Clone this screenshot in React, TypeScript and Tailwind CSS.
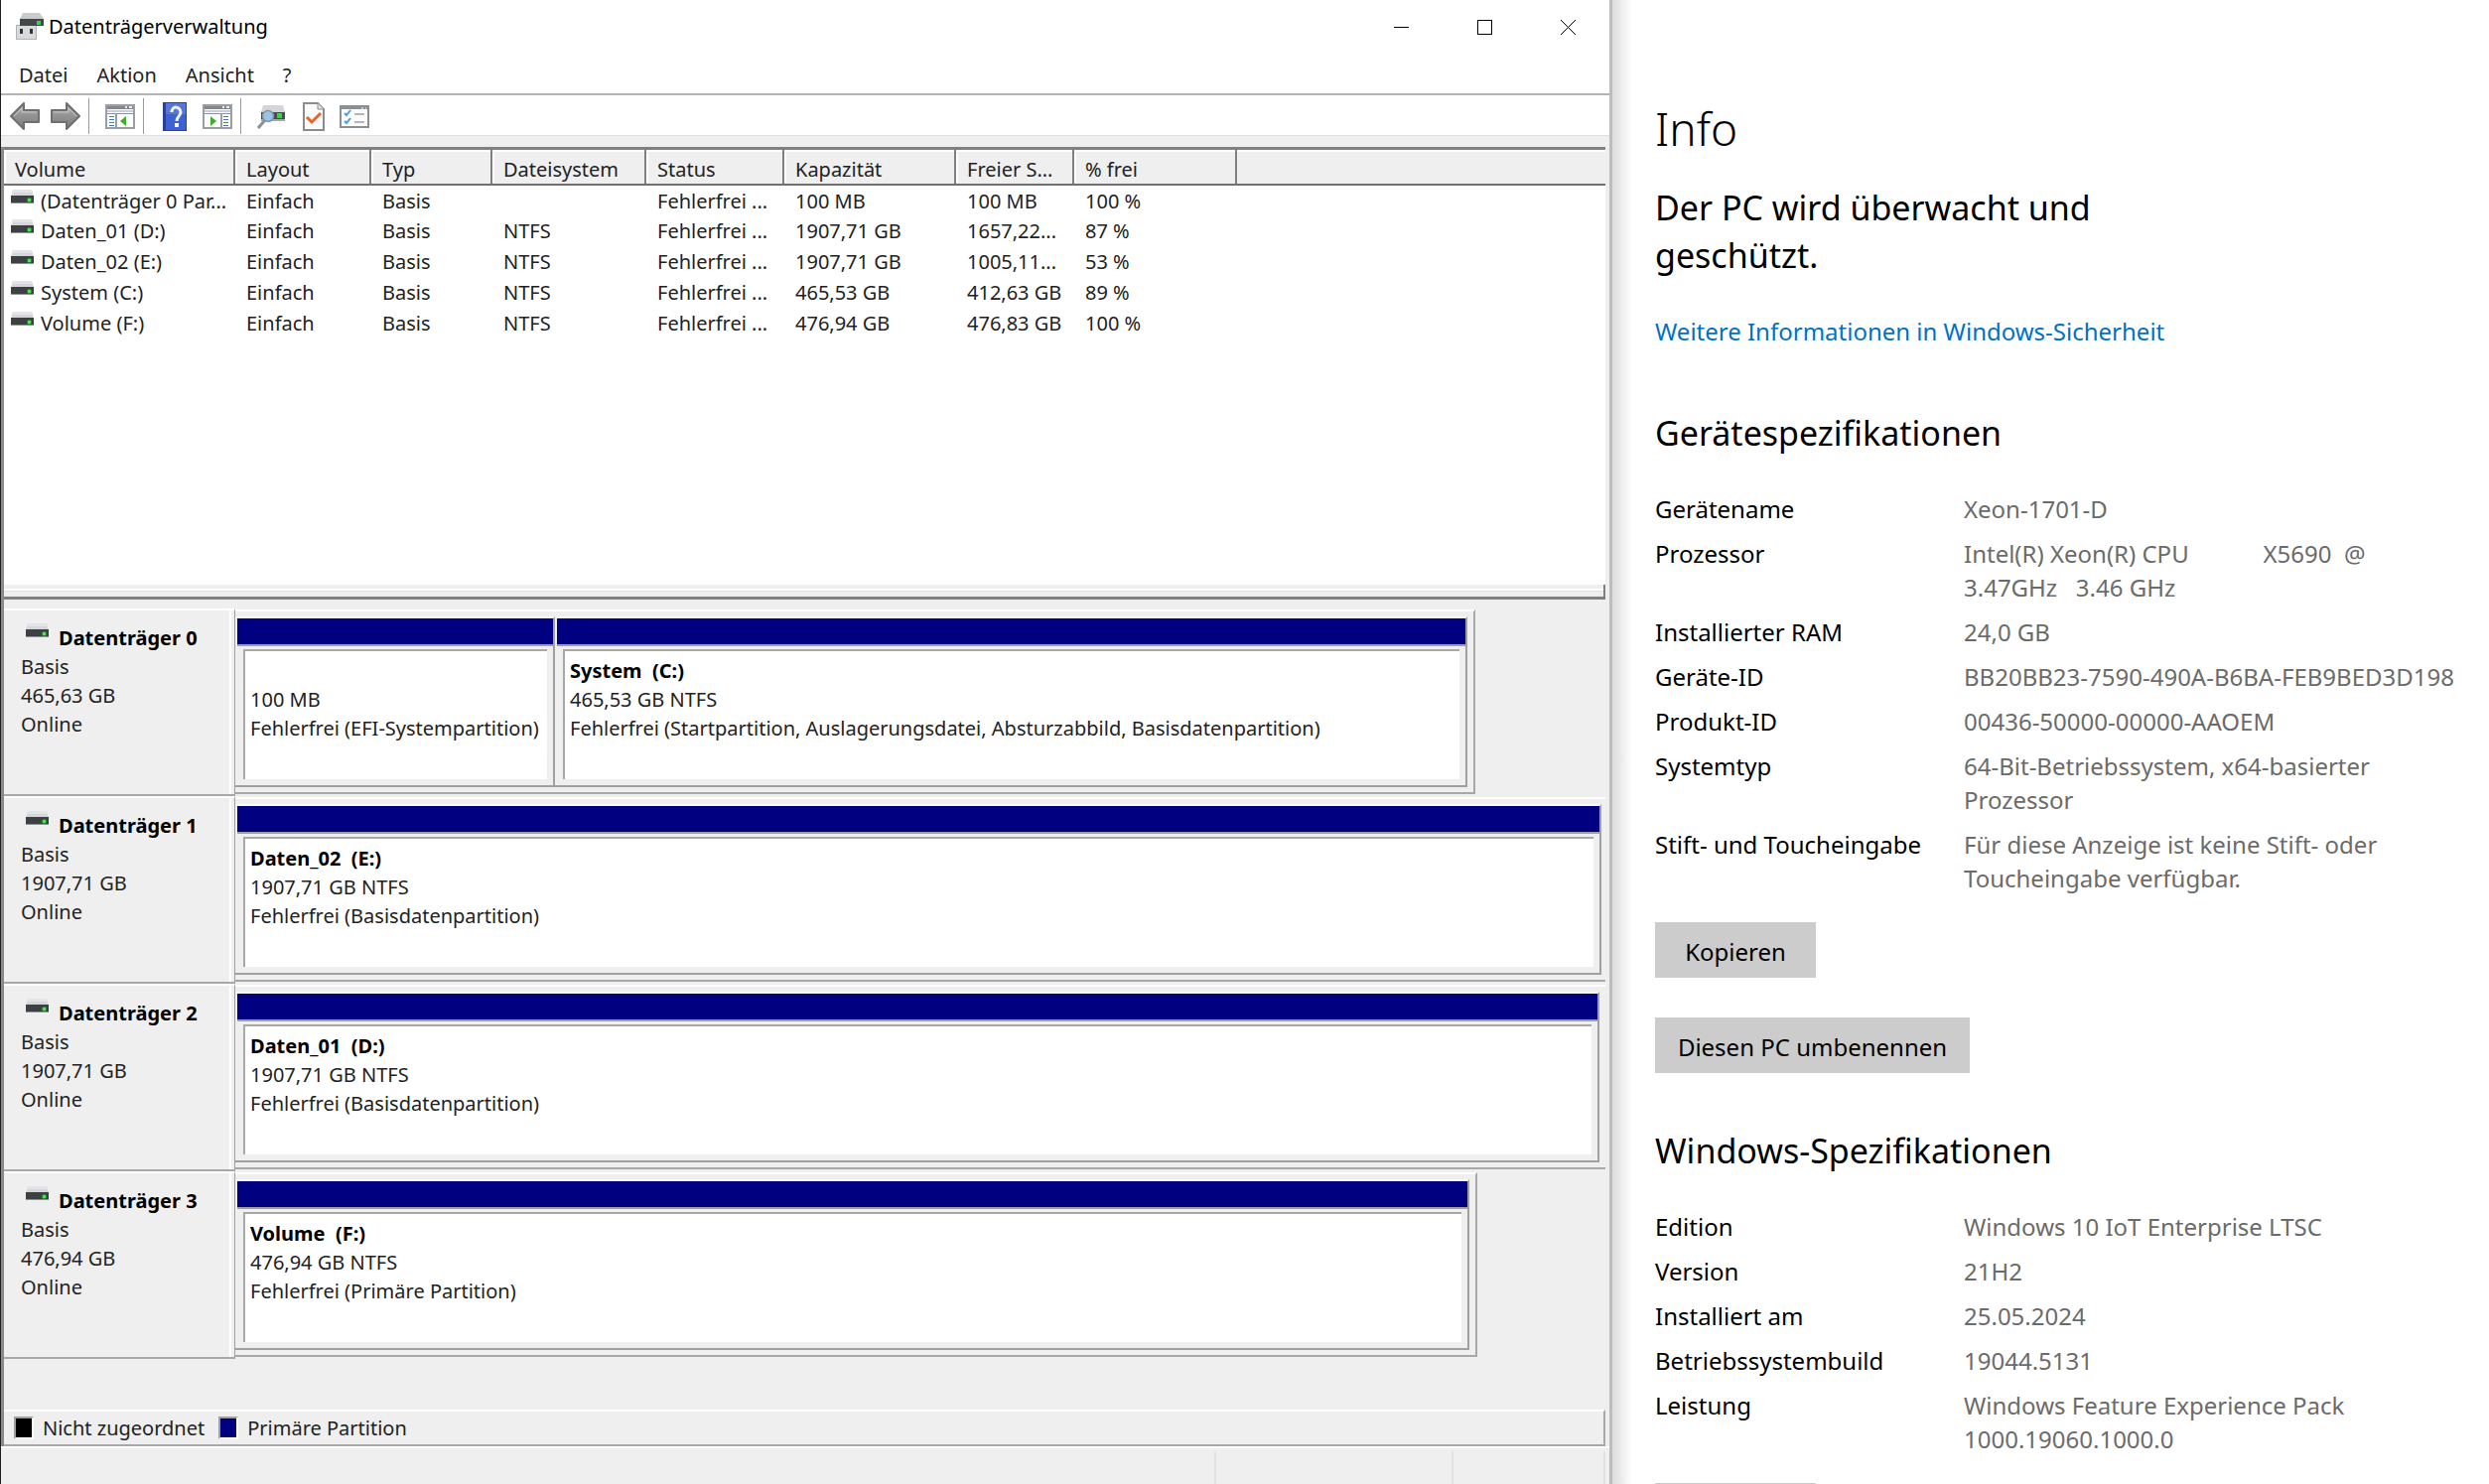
import React, { useState } from "react";

type Volume = {
  name: string;
  layout: string;
  type: string;
  fs: string;
  status: string;
  capacity: string;
  free: string;
  percent: string;
};

type Partition = {
  name: string;
  size: string;
  status: string;
  className: string;
};

type Disk = {
  name: string;
  type: string;
  size: string;
  state: string;
  className: string;
  partitions: Partition[];
};

const columns = [
  { title: "Volume", className: "w-[232px]" },
  { title: "Layout", className: "w-[137px]" },
  { title: "Typ", className: "w-[122px]" },
  { title: "Dateisystem", className: "w-[155px]" },
  { title: "Status", className: "w-[139px]" },
  { title: "Kapazität", className: "w-[173px]" },
  { title: "Freier S...", className: "w-[119px]" },
  { title: "% frei", className: "w-[164px]" },
];

const volumes: Volume[] = [
  { name: "(Datenträger 0 Par...", layout: "Einfach", type: "Basis", fs: "", status: "Fehlerfrei ...", capacity: "100 MB", free: "100 MB", percent: "100 %" },
  { name: "Daten_01 (D:)", layout: "Einfach", type: "Basis", fs: "NTFS", status: "Fehlerfrei ...", capacity: "1907,71 GB", free: "1657,22...", percent: "87 %" },
  { name: "Daten_02 (E:)", layout: "Einfach", type: "Basis", fs: "NTFS", status: "Fehlerfrei ...", capacity: "1907,71 GB", free: "1005,11...", percent: "53 %" },
  { name: "System (C:)", layout: "Einfach", type: "Basis", fs: "NTFS", status: "Fehlerfrei ...", capacity: "465,53 GB", free: "412,63 GB", percent: "89 %" },
  { name: "Volume (F:)", layout: "Einfach", type: "Basis", fs: "NTFS", status: "Fehlerfrei ...", capacity: "476,94 GB", free: "476,83 GB", percent: "100 %" },
];

const disks: Disk[] = [
  {
    name: "Datenträger 0",
    type: "Basis",
    size: "465,63 GB",
    state: "Online",
    className: "mr-[131px] border-r-2 pr-[6px]",
    partitions: [
      { name: "", size: "100 MB", status: "Fehlerfrei (EFI-Systempartition)", className: "w-[322px] shrink-0" },
      {
        name: "System  (C:)",
        size: "465,53 GB NTFS",
        status: "Fehlerfrei (Startpartition, Auslagerungsdatei, Absturzabbild, Basisdatenpartition)",
        className: "flex-1",
      },
    ],
  },
  {
    name: "Datenträger 1",
    type: "Basis",
    size: "1907,71 GB",
    state: "Online",
    className: "pr-1",
    partitions: [
      { name: "Daten_02  (E:)", size: "1907,71 GB NTFS", status: "Fehlerfrei (Basisdatenpartition)", className: "flex-1" },
    ],
  },
  {
    name: "Datenträger 2",
    type: "Basis",
    size: "1907,71 GB",
    state: "Online",
    className: "pr-[6px]",
    partitions: [
      { name: "Daten_01  (D:)", size: "1907,71 GB NTFS", status: "Fehlerfrei (Basisdatenpartition)", className: "flex-1" },
    ],
  },
  {
    name: "Datenträger 3",
    type: "Basis",
    size: "476,94 GB",
    state: "Online",
    className: "mr-[129px] border-r-2 pr-[6px]",
    partitions: [
      { name: "Volume  (F:)", size: "476,94 GB NTFS", status: "Fehlerfrei (Primäre Partition)", className: "flex-1" },
    ],
  },
];

const deviceSpecs = [
  ["Gerätename", "Xeon-1701-D"],
  ["Prozessor", "Intel(R) Xeon(R) CPU            X5690  @ 3.47GHz   3.46 GHz"],
  ["Installierter RAM", "24,0 GB"],
  ["Geräte-ID", "BB20BB23-7590-490A-B6BA-FEB9BED3D198"],
  ["Produkt-ID", "00436-50000-00000-AAOEM"],
  ["Systemtyp", "64-Bit-Betriebssystem, x64-basierter Prozessor"],
  ["Stift- und Toucheingabe", "Für diese Anzeige ist keine Stift- oder Toucheingabe verfügbar."],
];

const windowsSpecs = [
  ["Edition", "Windows 10 IoT Enterprise LTSC"],
  ["Version", "21H2"],
  ["Installiert am", "25.05.2024"],
  ["Betriebssystembuild", "19044.5131"],
  ["Leistung", "Windows Feature Experience Pack 1000.19060.1000.0"],
];

function DriveIcon() {
  return (
    <svg width="25" height="15" viewBox="0 0 25 15" className="shrink-0">
      <path d="M3 0h19l2 7H1z" fill="#d5d7da" />
      <path d="M3 0h19l1 3H2z" fill="#e2e4e7" />
      <rect x="1" y="6" width="23" height="8" fill="#3d4143" />
      <rect x="1" y="13" width="23" height="1" fill="#8f9293" />
      <path d="M18 8h3v1h1v3h-1v1h-3v-1h-1V9h1z" fill="#1f8a2a" />
      <rect x="18" y="9" width="3" height="3" fill="#4fe05a" />
    </svg>
  );
}

function AppIcon() {
  return (
    <svg width="28" height="28" viewBox="0 0 28 28" className="shrink-0">
      <path d="M0 12h7v-2h10v2h4v15H0z" fill="#b0b2b4" />
      <path d="M1 13h19v13H1z" fill="#d9dadb" />
      <rect x="4" y="16" width="3" height="5" fill="#333" />
      <rect x="14" y="16" width="3" height="5" fill="#333" />
      <path d="M7 0h17l4 6H4z" fill="#c9cbce" />
      <rect x="4" y="6" width="24" height="7" fill="#43484a" />
      <rect x="21" y="8" width="4" height="4" fill="#35d24a" />
    </svg>
  );
}

function ArrowIcon({ right = false }: { right?: boolean }) {
  return (
    <svg width="30" height="28" viewBox="0 0 30 28">
      <defs>
        <linearGradient id={right ? "arrow-r" : "arrow-l"} x1="0" y1="0" x2="0" y2="1">
          <stop offset="0" stopColor="#b5b5b5" />
          <stop offset="0.5" stopColor="#929292" />
          <stop offset="1" stopColor="#7c7c7c" />
        </linearGradient>
      </defs>
      <path
        d={right ? "M29 14 16 1v7H1v12h15v7z" : "M1 14 14 1v7h15v12H14v7z"}
        fill={right ? "url(#arrow-r)" : "url(#arrow-l)"}
        stroke="#6f6f6f"
        strokeWidth="2"
        strokeLinejoin="round"
      />
      <path
        d={right ? "M3 10h15V6l8 8" : "M4 14l8-8v4h15"}
        fill="none"
        stroke="#c8c8c8"
        strokeWidth="1"
      />
    </svg>
  );
}

function PaneIcon({ right = false }: { right?: boolean }) {
  const list = right ? 21 : 4;
  return (
    <svg width="30" height="25" viewBox="0 0 30 25">
      <rect x="1" y="1" width="28" height="23" fill="#fff" stroke="#9a9fa6" strokeWidth="2" />
      <rect x="2" y="2" width="26" height="3" fill="#7d8795" />
      <path d="M20 3h2M24 3h3" stroke="#e8ecf2" strokeWidth="2" />
      <rect x="2" y="6" width="26" height="2" fill="#c9cfd8" />
      <rect x="2" y="9" width="26" height="1" fill="#8b929c" />
      <rect x={right ? 18 : 10} y="9" width="2" height="15" fill="#9a9fa6" />
      {[12, 15, 18, 21].map((y) => (
        <rect key={y} x={list} y={y} width="5" height="1" fill="#3f7cc4" />
      ))}
      <path d={right ? "M8 12v10l6-5z" : "M21 12v10l-6-5z"} fill="#3fae2a" />
    </svg>
  );
}

function HelpIcon() {
  return (
    <svg width="24" height="29" viewBox="0 0 24 29">
      <rect x="0" y="0" width="24" height="29" fill="#2b3f9c" />
      <rect x="3" y="1" width="20" height="27" fill="#3f62d2" />
      <rect x="3" y="1" width="20" height="11" fill="#5477dd" />
      <path
        d="M9 10c0-3 2-5 4-5s5 2 5 5c0 4-4 4-4 9"
        fill="none"
        stroke="#f2f5ff"
        strokeWidth="3"
      />
      <rect x="12" y="21" width="4" height="4" fill="#f2f5ff" />
    </svg>
  );
}

function SearchDriveIcon() {
  return (
    <svg width="28" height="25" viewBox="0 0 28 25">
      <path d="M6 1h20l2 7H4z" fill="#d3d5d8" />
      <rect x="4" y="8" width="24" height="7" fill="#474c4f" />
      <rect x="4" y="15" width="24" height="2" fill="#a5a8aa" />
      <rect x="20" y="9" width="5" height="5" fill="#35d24a" />
      <path d="M1 24 8 16" stroke="#8d9298" strokeWidth="3" />
      <circle cx="11" cy="12" r="5.500" fill="#9cc4e0" stroke="#7c98ad" strokeWidth="1.500" />
    </svg>
  );
}

function DocCheckIcon() {
  return (
    <svg width="22" height="29" viewBox="0 0 22 29">
      <path d="M1 1h14l6 6v21H1z" fill="#fbfbfb" stroke="#8c8c8c" strokeWidth="2" />
      <path d="M15 1v6h6" fill="#e3e3e3" stroke="#8c8c8c" strokeWidth="1" />
      <path d="M4 15l5 5 9-9" fill="none" stroke="#e8622a" strokeWidth="3" />
    </svg>
  );
}

function ChecklistIcon() {
  return (
    <svg width="30" height="23" viewBox="0 0 30 23">
      <rect x="1" y="1" width="28" height="21" fill="#fcfcfc" stroke="#8a8f94" strokeWidth="2" />
      <rect x="1" y="1" width="28" height="3" fill="#8a8f94" />
      <path d="M22 3h2M26 3h1" stroke="#fff" strokeWidth="1" />
      <path d="M5 8l2 2 4-5M5 16l2 2 4-5" fill="none" stroke="#4a9be0" strokeWidth="2" />
      <path d="M15 9h10M15 17h10" stroke="#b4b8bc" strokeWidth="2" />
    </svg>
  );
}

function ToolSeparator() {
  return <div className="h-9 w-px bg-[#9a9a9a]" />;
}

function TitleBar() {
  return (
    <header className="flex h-[54px] items-center pl-[15px]">
      <AppIcon />
      <h1 className="ml-[5px] flex-1 text-[20px] leading-7 text-black">Datenträgerverwaltung</h1>
      <button aria-label="Minimieren" className="flex h-full w-[84px] items-center justify-center">
        <svg width="15" height="15" viewBox="0 0 15 15">
          <path d="M0 7.500h15" stroke="#000" />
        </svg>
      </button>
      <button aria-label="Maximieren" className="flex h-full w-[84px] items-center justify-center">
        <svg width="15" height="15" viewBox="0 0 15 15">
          <rect x="0.500" y="0.500" width="14" height="14" fill="none" stroke="#000" />
        </svg>
      </button>
      <button aria-label="Schließen" className="flex h-full w-[84px] items-center justify-center">
        <svg width="15" height="15" viewBox="0 0 15 15">
          <path d="M0 0l15 15M15 0L0 15" stroke="#000" />
        </svg>
      </button>
    </header>
  );
}

function Toolbar() {
  return (
    <div className="flex h-10 items-center pt-0.5 pl-[9px]">
      <button aria-label="Zurück"><ArrowIcon /></button>
      <button aria-label="Vorwärts" className="mr-2 ml-[11px]"><ArrowIcon right /></button>
      <ToolSeparator />
      <button aria-label="Konsolenstruktur" className="mx-2 pl-2"><PaneIcon /></button>
      <ToolSeparator />
      <button aria-label="Hilfe" className="ml-[19px]"><HelpIcon /></button>
      <button aria-label="Aktionsbereich" className="mr-2 ml-4"><PaneIcon right /></button>
      <ToolSeparator />
      <button aria-label="Datenträger neu einlesen" className="ml-4"><SearchDriveIcon /></button>
      <button aria-label="Eigenschaften" className="ml-[18px]"><DocCheckIcon /></button>
      <button aria-label="Einstellungen" className="ml-[15px]"><ChecklistIcon /></button>
    </div>
  );
}

function VolumeTable() {
  const [selected, setSelected] = useState<string | null>(null);

  return (
    <div className="min-h-0 flex-1 overflow-hidden border-t-[3px] border-[#808080] bg-white">
      <table className="w-full table-fixed border-collapse text-left">
        <thead>
          <tr className="h-[34px] bg-[#efefef]">
            {columns.map((col) => (
              <th
                key={col.title}
                className={`${col.className} border-t-2 border-r-2 border-b-2 border-t-white border-r-[#808080] border-b-[#707070] p-0 font-normal`}
              >
                <div className="overflow-hidden border-l-2 border-white pt-1 pl-[9px] leading-[26px] whitespace-nowrap">
                  {col.title}
                </div>
              </th>
            ))}
            <th className="border-t-2 border-b-2 border-t-white border-b-[#707070] p-0" />
          </tr>
        </thead>
        <tbody>
          {volumes.map((v) => (
            <tr
              key={v.name}
              onClick={() => setSelected(v.name)}
              className={`h-[31px] whitespace-nowrap ${selected === v.name ? "bg-[#cce8ff]" : ""}`}
            >
              <td className="overflow-hidden p-0 align-top">
                <div className="flex items-start gap-1.5 pt-0.5 pl-[6px] leading-[27px]">
                  <div className="pt-0.5">
                    <DriveIcon />
                  </div>
                  {v.name}
                </div>
              </td>
              {[v.layout, v.type, v.fs, v.status, v.capacity, v.free, v.percent].map((text, i) => (
                <td key={i} className="overflow-hidden p-0 pt-0.5 pl-3 align-top leading-[27px]">
                  {text}
                </td>
              ))}
              <td />
            </tr>
          ))}
        </tbody>
      </table>
    </div>
  );
}

function PartitionBox({ partition }: { partition: Partition }) {
  return (
    <div className={`${partition.className} min-w-0 border-t-2 border-r-2 border-b-2 border-[#a0a0a0] border-t-[#fafafa] pb-[6px] pl-[2px]`}>
      <div className="h-7 border-b-2 border-[#a0a0a0] bg-[#000080]" />
      <div className="mx-[6px] mt-[3px] h-[131px] overflow-hidden border-t-2 border-l-2 border-[#a8a8a8] bg-white pt-[5px] pr-[6px] pl-[5px] leading-[29px]">
        <p className="h-[29px] font-bold whitespace-pre text-black">{partition.name}</p>
        <p className="whitespace-nowrap">{partition.size}</p>
        <p className="overflow-hidden whitespace-nowrap">{partition.status}</p>
      </div>
    </div>
  );
}

function DiskRow({ disk }: { disk: Disk }) {
  return (
    <section className="flex h-[189px]">
      <div className="w-[233px] shrink-0 border-t-2 border-r-[1px] border-b-2 border-t-white border-r-[#a0a0a0] border-b-[#a8a8a8]">
        <div className="mr-[3px] h-full border-r-2 border-white pt-[13px] pl-[17px] leading-[29px]">
          <div className="flex gap-[9px] pl-1">
            <DriveIcon />
            <h2 className="font-bold whitespace-nowrap text-black">{disk.name}</h2>
          </div>
          <p>{disk.type}</p>
          <p>{disk.size}</p>
          <p>{disk.state}</p>
        </div>
      </div>
      <div className="min-w-0 flex-1 border-b-2 border-[#efefef] pt-px">
        <div className={`${disk.className} flex border-t-2 border-b-2 border-[#a8a8a8] border-t-white pt-[5px] pb-[5px]`}>
          {disk.partitions.map((p) => (
            <PartitionBox key={p.status} partition={p} />
          ))}
        </div>
      </div>
    </section>
  );
}

function DiskManagement() {
  return (
    <main className="flex min-w-0 flex-1 flex-col border-l border-[#202020] bg-white text-[20px] text-[#222222]">
      <TitleBar />
      <nav className="flex h-[42px] items-center border-b-2 border-[#b4b4b4] pt-1 pl-[18px]">
        <button className="mr-[29px]">Datei</button>
        <button className="mr-[29px]">Aktion</button>
        <button className="mr-[29px]">Ansicht</button>
        <button>?</button>
      </nav>
      <Toolbar />
      <div className="h-3 border-t border-[#e0e0e0] bg-[#efefef]" />

      <div className="flex min-h-0 flex-1 flex-col bg-[#efefef] pr-1">
        <div className="flex min-h-0 flex-1 flex-col border-l-[3px] border-[#8a8a8a]">
          <VolumeTable />
          <div className="h-[15px] border-r-2 border-b-[3px] border-[#808080] pt-1">
            <div className="h-[3px] border-b border-[#e0e0e0] bg-white" />
          </div>
          <div className="pt-[9px] pb-[51px]">
            {disks.map((d) => (
              <DiskRow key={d.name} disk={d} />
            ))}
          </div>
          <footer className="flex h-[37px] items-center border-t-2 border-r-2 border-b-2 border-[#a8a8a8] border-t-white pl-[10px]">
            <span className="h-[23px] w-5 border-2 border-[#a0a0a0] border-r-white border-b-white bg-black" />
            <span className="mr-[14px] ml-[9px]">Nicht zugeordnet</span>
            <span className="h-[23px] w-5 border-2 border-[#a0a0a0] border-r-white border-b-white bg-[#000080]" />
            <span className="ml-[9px]">Primäre Partition</span>
          </footer>
        </div>
      </div>
      <div className="flex h-[38px] border-t-2 border-white bg-[#efefef]">
        <div className="mt-[3px] flex-1 border-t border-r-2 border-[#e2e2e2] border-t-[#efefef]" />
        <div className="mt-[3px] w-[239px] border-r-2 border-[#e2e2e2]" />
        <div className="mt-[3px] mr-1 w-[153px] border-r-2 border-[#e2e2e2]" />
      </div>
    </main>
  );
}

function SpecList({ specs }: { specs: string[][] }) {
  return (
    <dl className="grid grid-cols-[311px_1fr] gap-y-[11px] text-[24px] leading-[34px]">
      {specs.map(([label, value]) => (
        <React.Fragment key={label}>
          <dt className="text-black">{label}</dt>
          <dd className="whitespace-pre-wrap text-[#6b6b6b]">{value}</dd>
        </React.Fragment>
      ))}
    </dl>
  );
}

function InfoPanel() {
  return (
    <aside className="flex w-[886px] shrink-0 bg-white text-black">
      <div className="w-[3px] bg-[#bdbdbd]" />
      <div className="w-5 bg-linear-to-r from-[#dcdcdc] to-white" />
      <div className="flex-1 pt-[97px] pr-[29px] pl-[23px]">
        <h1 className="text-[46px] leading-[64px] font-light">Info</h1>
        <h2 className="mt-6 max-w-[480px] text-[34px] leading-[48px]">
          Der PC wird überwacht und geschützt.
        </h2>
        <a href="#sicherheit" className="mt-9 block text-[24px] leading-[34px] text-[#0071c5]">
          Weitere Informationen in Windows-Sicherheit
        </a>

        <h2 className="mt-[61px] mb-9 text-[34px] leading-[48px]">Gerätespezifikationen</h2>
        <SpecList specs={deviceSpecs} />
        <button className="mt-[27px] block h-14 w-[162px] bg-[#cccccc] pt-1 text-[24px]">Kopieren</button>
        <button className="mt-10 block h-14 w-[317px] bg-[#cccccc] pt-1 text-[24px]">
          Diesen PC umbenennen
        </button>

        <h2 className="mt-[54px] mb-9 text-[34px] leading-[48px]">Windows-Spezifikationen</h2>
        <SpecList specs={windowsSpecs} />
        <button aria-label="Kopieren" className="mt-[27px] block h-14 w-[162px] bg-[#cccccc]" />
      </div>
    </aside>
  );
}

export default function App() {
  return (
    <div className="flex h-screen overflow-hidden bg-white font-['Noto_Sans','Open_Sans',sans-serif]">
      <DiskManagement />
      <InfoPanel />
    </div>
  );
}
